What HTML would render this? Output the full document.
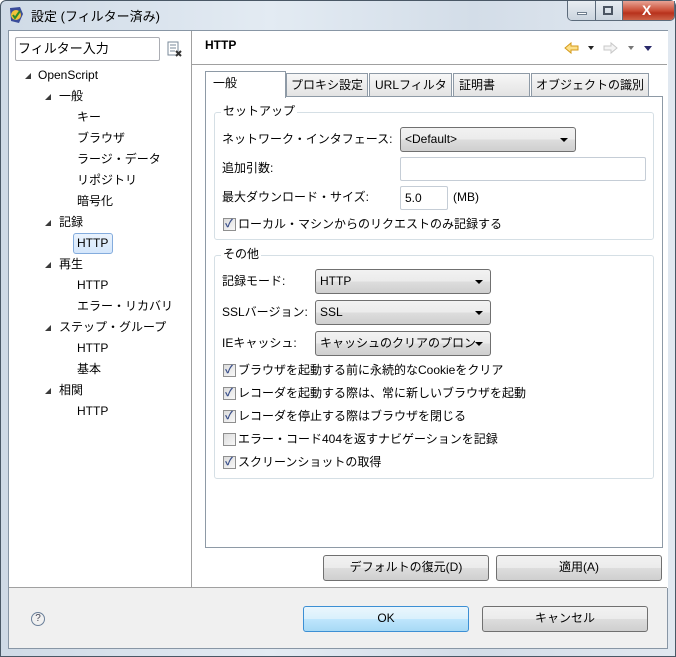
<!DOCTYPE html>
<html><head><meta charset="utf-8"><style>
*{margin:0;padding:0;box-sizing:border-box}
body{width:676px;height:657px;overflow:hidden;font-family:"Liberation Sans","Noto Sans CJK JP",sans-serif;font-size:12px;line-height:16px;color:#000;background:#fff}
.a{position:absolute;white-space:nowrap;line-height:16px}
#win{position:absolute;left:0;top:0;width:676px;height:657px;border:1px solid #4a5866;border-radius:6px 6px 0 0;background:linear-gradient(90deg,#cfdae6,#e3ebf3 40%,#d3dde8 70%,#e1e8f0)}
#client{position:absolute;left:8px;top:30px;width:660px;height:619px;background:#f0f0f0;border:1px solid #8896a5}
.btn{position:absolute;height:26px;border:1px solid #707070;border-radius:3px;background:linear-gradient(#f2f2f2 0,#ebebeb 50%,#dddddd 51%,#cfcfcf 100%);text-align:center;line-height:23px;white-space:nowrap}
.combo{position:absolute;height:25px;border:1px solid #707070;border-radius:3px;background:linear-gradient(#f2f2f2 0,#ebebeb 50%,#dddddd 51%,#cfcfcf 100%);padding-left:4px;line-height:22px;white-space:nowrap;overflow:hidden}
.combo:after{content:"";position:absolute;right:7px;top:10px;border-left:4px solid transparent;border-right:4px solid transparent;border-top:4px solid #000}
.inp{position:absolute;background:#fff;border:1px solid #c5cdd6;border-radius:2px}
.tab{position:absolute;top:73px;height:23px;border:1px solid #8e9aa6;border-bottom:none;background:linear-gradient(#f7f7f7,#e3e3e3);padding-left:5px;line-height:22px;white-space:nowrap;overflow:hidden}
.grp{position:absolute;border:1px solid #d5dfe5;border-radius:3px}
.glab{position:absolute;background:#fff;padding:0 2px;line-height:14px;white-space:nowrap}
.cb{position:absolute;width:13px;height:13px;border:1px solid #8f8f8f;background:linear-gradient(135deg,#dcdcdc,#f8f8f8)}
.cb.c:after{content:"✓";position:absolute;left:1px;top:-2px;font-size:11px;line-height:14px;color:#3a4f8a;font-weight:bold}
.tri{position:absolute;width:0;height:0;border-left:6px solid transparent;border-bottom:6px solid #3b3b3b}
</style></head><body>
<div id="win">
 <svg class="a" style="left:6px;top:5px" width="18" height="18" viewBox="0 0 18 18"><path d="M3 2 L13 1 L16 8 L12 17 L4 15 Z" fill="#3a4c9a"/><circle cx="9" cy="9" r="5" fill="#f3c23a"/><path d="M6 9 L8 12 L13 5" stroke="#2a8a2a" stroke-width="2" fill="none"/></svg>
 <div class="a" style="left:30px;top:8px;font-size:13px">設定 (フィルター済み)</div>
 <div class="a" style="left:566px;top:0;width:108px;height:20px;border:1px solid #5c6b7b;border-top:none;border-radius:0 0 5px 5px;overflow:hidden">
  <div class="a" style="left:0;top:0;width:27px;height:20px;background:linear-gradient(#e8edf2,#c9d3de)"></div>
  <div class="a" style="left:9px;top:11px;width:10px;height:3px;border:1px solid #6f7e8e;background:#fff"></div>
  <div class="a" style="left:27px;top:0;width:26px;height:20px;border-left:1px solid #5c6b7b;background:linear-gradient(#e8edf2,#c9d3de)"></div>
  <div class="a" style="left:35px;top:5px;width:10px;height:9px;border:2px solid #4b5562"></div>
  <div class="a" style="left:54px;top:0;width:54px;height:20px;border-left:1px solid #5c6b7b;background:linear-gradient(#e8a395,#c94a32 50%,#b8321c 60%,#d06a4f)"></div>
  <div class="a" style="left:74px;top:1px;color:#fff;font-weight:bold;font-size:14px">X</div>
 </div>
</div>
<div id="client">
 <div class="a" style="left:0;top:0;width:183px;height:557px;background:#fff;border-right:1px solid #a0a0a0"></div>
 <div class="a" style="left:183px;top:0;width:476px;height:557px;background:#fff"></div>
 <div class="a" style="left:0;top:556px;width:658px;height:1px;background:#a0a0a0"></div>
</div>
<div class="inp" style="left:15px;top:37px;width:145px;height:24px;border-color:#abadb3"></div>
<div class="a" style="left:18px;top:41px;font-size:13px">フィルター入力</div>
<svg class="a" style="left:167px;top:41px" width="16" height="16"><rect x="1" y="1" width="10" height="13" fill="#fff" stroke="#7a8a9a"/><path d="M3 4h6M3 7h6M3 10h5" stroke="#7a8a9a"/><path d="M9 10l5 5M14 10l-5 5" stroke="#333" stroke-width="2"/></svg>
<div class="tri" style="left:25px;top:73px"></div><div class="a" style="left:38px;top:67px">OpenScript</div>
<div class="tri" style="left:45px;top:94px"></div><div class="a" style="left:59px;top:88px">一般</div>
<div class="a" style="left:77px;top:109px">キー</div>
<div class="a" style="left:77px;top:130px">ブラウザ</div>
<div class="a" style="left:77px;top:151px">ラージ・データ</div>
<div class="a" style="left:77px;top:172px">リポジトリ</div>
<div class="a" style="left:77px;top:193px">暗号化</div>
<div class="tri" style="left:45px;top:220px"></div><div class="a" style="left:59px;top:214px">記録</div>
<div class="a" style="left:73px;top:233px;width:40px;height:21px;border:1px solid #84acdd;border-radius:3px;background:linear-gradient(#eaf3fd,#d4e6fb)"></div>
<div class="a" style="left:77px;top:235px">HTTP</div>
<div class="tri" style="left:45px;top:262px"></div><div class="a" style="left:59px;top:256px">再生</div>
<div class="a" style="left:77px;top:277px">HTTP</div>
<div class="a" style="left:77px;top:298px">エラー・リカバリ</div>
<div class="tri" style="left:45px;top:325px"></div><div class="a" style="left:59px;top:319px">ステップ・グループ</div>
<div class="a" style="left:77px;top:340px">HTTP</div>
<div class="a" style="left:77px;top:361px">基本</div>
<div class="tri" style="left:45px;top:388px"></div><div class="a" style="left:59px;top:382px">相関</div>
<div class="a" style="left:77px;top:403px">HTTP</div>
<div class="a" style="left:205px;top:37px;font-weight:bold">HTTP</div>
<div class="a" style="left:192px;top:64px;width:475px;height:1px;background:#a0a0a0"></div>
<svg class="a" style="left:563px;top:41px" width="100" height="14"><path d="M2 7 L8 2 L8 5 L15 5 L15 9 L8 9 L8 12 Z" fill="#fde08a" stroke="#d49a1a"/><path d="M25 5h6l-3 4z" fill="#222"/><path d="M54 7 L48 2 L48 5 L41 5 L41 9 L48 9 L48 12 Z" fill="#f4f4f4" stroke="#c8c8c8"/><path d="M65 5h6l-3 4z" fill="#777"/><path d="M81 5h8l-4 5z" fill="#2a2a6a"/></svg>
<div class="a" style="left:205px;top:96px;width:458px;height:452px;border:1px solid #8e9aa6;background:#fff"></div>
<div class="tab" style="left:286px;width:82px;padding-left:4px">プロキシ設定</div>
<div class="tab" style="left:369px;width:83px">URLフィルタ</div>
<div class="tab" style="left:453px;width:77px">証明書</div>
<div class="tab" style="left:531px;width:118px;padding-left:4px">オブジェクトの識別</div>
<div class="a" style="left:205px;top:71px;width:81px;height:27px;border:1px solid #8e9aa6;border-bottom:none;background:#fff;padding:3px 0 0 7px">一般</div>
<div class="grp" style="left:214px;top:112px;width:440px;height:128px"></div>
<div class="glab" style="left:221px;top:104px">セットアップ</div>
<div class="a" style="left:222px;top:131px">ネットワーク・インタフェース:</div>
<div class="combo" style="left:400px;top:127px;width:176px">&lt;Default&gt;</div>
<div class="a" style="left:222px;top:160px">追加引数:</div>
<div class="inp" style="left:400px;top:157px;width:246px;height:24px"></div>
<div class="a" style="left:222px;top:189px">最大ダウンロード・サイズ:</div>
<div class="inp" style="left:400px;top:186px;width:48px;height:24px"></div>
<div class="a" style="left:405px;top:190px">5.0</div>
<div class="a" style="left:453px;top:189px">(MB)</div>
<div class="cb c" style="left:223px;top:218px"></div><div class="a" style="left:238px;top:216px">ローカル・マシンからのリクエストのみ記録する</div>
<div class="grp" style="left:214px;top:255px;width:440px;height:224px"></div>
<div class="glab" style="left:221px;top:247px">その他</div>
<div class="a" style="left:222px;top:273px">記録モード:</div>
<div class="combo" style="left:315px;top:269px;width:176px">HTTP</div>
<div class="a" style="left:222px;top:304px">SSLバージョン:</div>
<div class="combo" style="left:315px;top:300px;width:176px">SSL</div>
<div class="a" style="left:222px;top:335px">IEキャッシュ:</div>
<div class="combo" style="left:315px;top:331px;width:176px;padding-right:22px">キャッシュのクリアのプロン</div>
<div class="cb c" style="left:223px;top:364px"></div><div class="a" style="left:238px;top:362px">ブラウザを起動する前に永続的なCookieをクリア</div>
<div class="cb c" style="left:223px;top:387px"></div><div class="a" style="left:238px;top:385px">レコーダを起動する際は、常に新しいブラウザを起動</div>
<div class="cb c" style="left:223px;top:410px"></div><div class="a" style="left:238px;top:408px">レコーダを停止する際はブラウザを閉じる</div>
<div class="cb" style="left:223px;top:433px"></div><div class="a" style="left:238px;top:431px">エラー・コード404を返すナビゲーションを記録</div>
<div class="cb c" style="left:223px;top:456px"></div><div class="a" style="left:238px;top:454px">スクリーンショットの取得</div>
<div class="btn" style="left:323px;top:555px;width:166px">デフォルトの復元(D)</div>
<div class="btn" style="left:496px;top:555px;width:166px">適用(A)</div>
<div class="a" style="left:31px;top:612px;width:14px;height:14px;border:1px solid #6a7f99;border-radius:50%;font-size:10px;text-align:center;line-height:12px;color:#445">?</div>
<div class="btn" style="left:303px;top:606px;width:166px;border-color:#3c8fd4;background:linear-gradient(#eaf6fd 0,#d9f0fc 50%,#bee6fd 51%,#a7d9f5 100%)">OK</div>
<div class="btn" style="left:482px;top:606px;width:166px">キャンセル</div>
</body></html>
